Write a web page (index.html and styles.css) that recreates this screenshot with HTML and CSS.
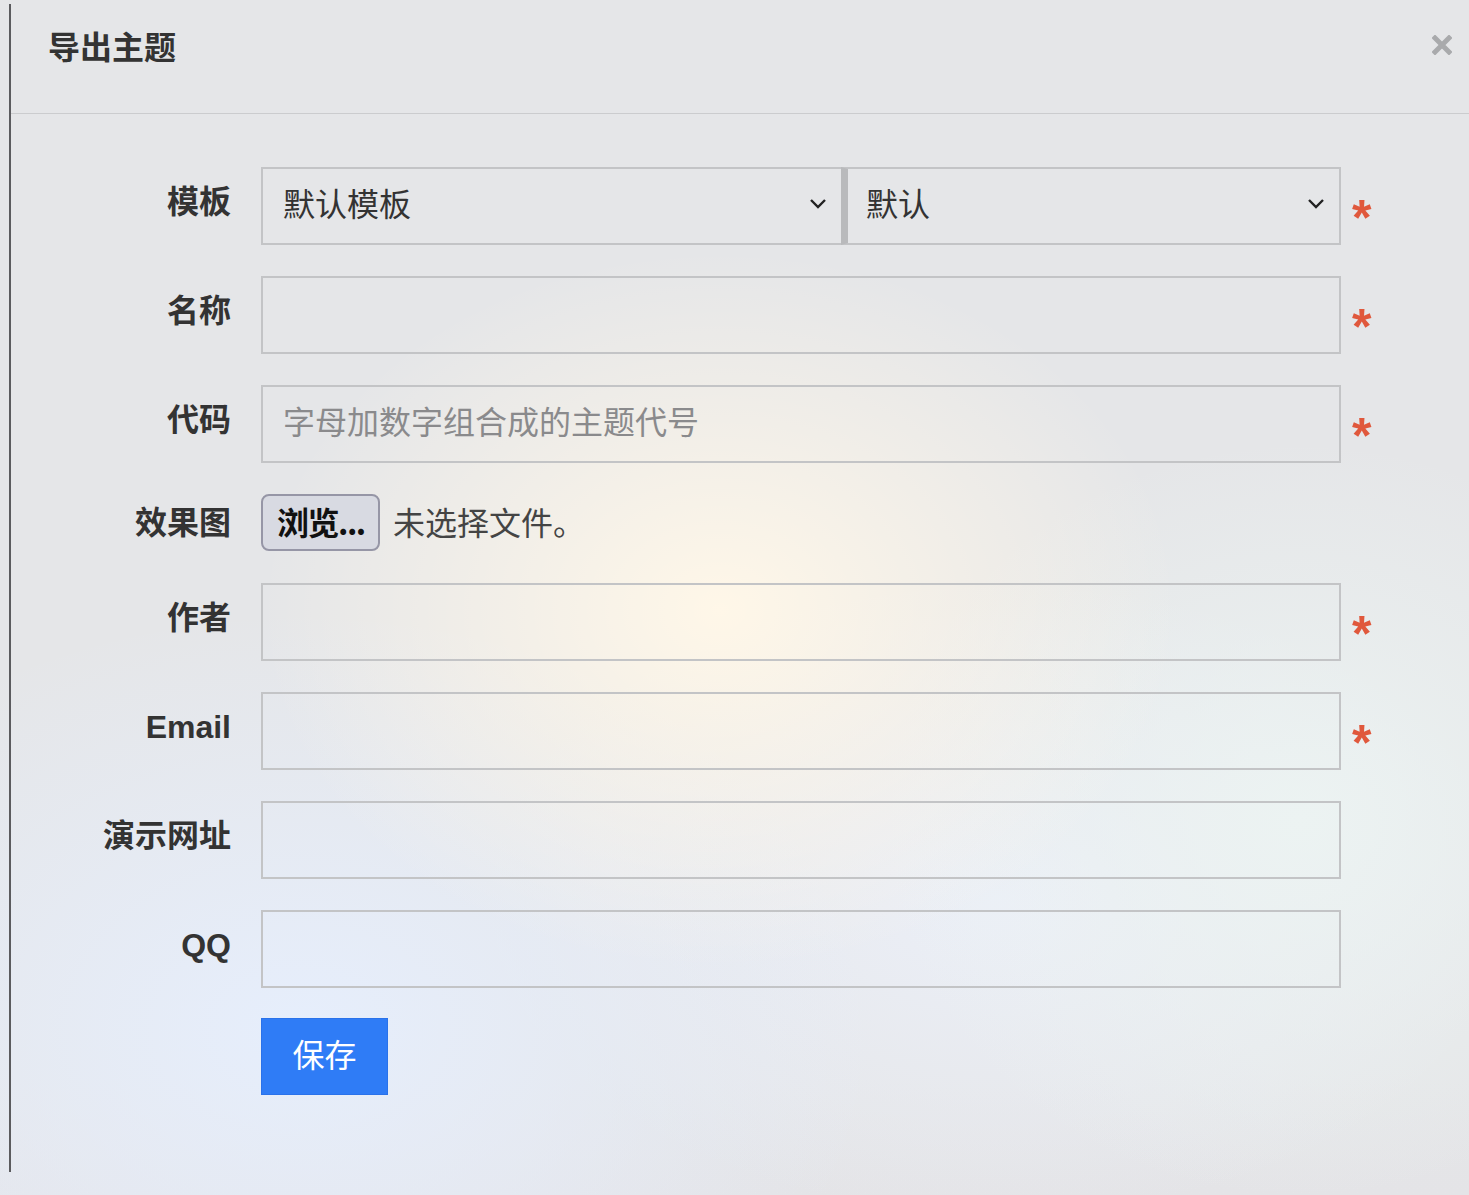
FILE: index.html
```html
<!DOCTYPE html>
<html lang="zh-CN">
<head>
<meta charset="utf-8">
<title>导出主题</title>
<link rel="stylesheet" href="styles.css">
</head>
<body>
<div class="dialog">
  <div class="dialog-header">
    <h1 class="dialog-title">导出主题</h1>
    <button class="close-btn" type="button" aria-label="关闭">
      <svg width="20" height="20" viewBox="0 0 20 20"><path d="M3 3 L17 17 M17 3 L3 17" stroke="#a9aaac" stroke-width="5" stroke-linecap="square" fill="none"/></svg>
    </button>
  </div>
  <form class="dialog-body">
    <div class="row">
      <label class="label">模板</label>
      <div class="control control-split">
        <select class="select select-a"><option>默认模板</option></select>
        <select class="select select-b"><option>默认</option></select>
      </div>
      <span class="req">*</span>
    </div>
    <div class="row">
      <label class="label">名称</label>
      <input class="control input" type="text">
      <span class="req">*</span>
    </div>
    <div class="row">
      <label class="label">代码</label>
      <input class="control input" type="text" placeholder="字母加数字组合成的主题代号">
      <span class="req">*</span>
    </div>
    <div class="row row-file">
      <label class="label">效果图</label>
      <div class="file">
        <span class="file-btn">浏览...</span>
        <span class="file-name">未选择文件。</span>
      </div>
    </div>
    <div class="row">
      <label class="label">作者</label>
      <input class="control input" type="text">
      <span class="req">*</span>
    </div>
    <div class="row">
      <label class="label">Email</label>
      <input class="control input" type="text">
      <span class="req">*</span>
    </div>
    <div class="row">
      <label class="label">演示网址</label>
      <input class="control input" type="text">
    </div>
    <div class="row">
      <label class="label">QQ</label>
      <input class="control input" type="text">
    </div>
    <div class="row row-actions">
      <span class="label"></span>
      <button class="save-btn" type="button">保存</button>
    </div>
  </form>
</div>
</body>
</html>
```
FILE: styles.css
```css
html, body {
  margin: 0;
  padding: 0;
}
body {
  width: 1469px;
  height: 1195px;
  overflow: hidden;
  font-family: "Liberation Sans", "Noto Sans CJK SC", sans-serif;
  color: #333;
  background-color: #e5e6e8;
  background-image:
    radial-gradient(ellipse 460px 360px at 720px 610px, rgba(255, 247, 232, 1), rgba(255, 247, 232, 0) 100%),
    radial-gradient(ellipse 580px 420px at 300px 1030px, rgba(230, 238, 252, 1), rgba(230, 238, 252, 0) 100%),
    radial-gradient(ellipse 420px 380px at 1300px 820px, rgba(236, 243, 242, 1), rgba(236, 243, 242, 0) 100%),
    radial-gradient(ellipse 520px 320px at 1000px 900px, rgba(236, 240, 249, 0.9), rgba(236, 240, 249, 0) 100%),
    linear-gradient(to bottom, rgba(229, 230, 232, 0) 1080px, rgba(228, 228, 231, 1) 1195px);
}
.dialog {
  margin: 4px 0 0 9px;
  height: 1168px;
  border-left: 2px solid #5b5b5e;
  box-sizing: border-box;
}
.dialog-header {
  height: 110px;
  box-sizing: border-box;
  border-bottom: 1px solid #cbccce;
  display: flex;
  justify-content: space-between;
  align-items: flex-start;
  padding: 19px 17px 0 37px;
}
.dialog-title {
  margin: 0;
  font-size: 32px;
  line-height: 44px;
  font-weight: 700;
  color: #333;
  font-family: "Noto Sans CJK SC", sans-serif;
}
.close-btn {
  margin-top: 12px;
  padding: 0;
  border: 0;
  background: none;
  width: 20px;
  height: 20px;
  display: block;
}
.close-btn svg {
  display: block;
}
.dialog-body {
  padding-top: 53px;
  margin: 0;
}
.row {
  display: flex;
  align-items: flex-start;
  height: 78px;
  margin-bottom: 31px;
}
.row-file {
  height: 58px;
}
.row-actions {
  margin-top: -1px;
  height: 77px;
}
.label {
  width: 220px;
  flex: none;
  margin-right: 30px;
  text-align: right;
  font-size: 32px;
  font-weight: 700;
  line-height: 44px;
  padding-top: 13px;
  color: #333;
  box-sizing: border-box;
}
.row-file .label {
  padding-top: 7px;
}
.control {
  width: 1080px;
  height: 78px;
  box-sizing: border-box;
  flex: none;
}
.input {
  border: 2px solid #c3c4c6;
  background: transparent;
  font-family: "Noto Sans CJK SC", sans-serif;
  font-size: 32px;
  padding: 0 20px 8px 20px;
  color: #333;
  margin: 0;
  outline: none;
}
.input::placeholder {
  color: #8a8a8c;
}
.control-split {
  display: flex;
}
.select {
  -webkit-appearance: none;
  appearance: none;
  height: 78px;
  box-sizing: border-box;
  margin: 0;
  border: 2px solid #c3c4c6;
  border-radius: 0;
  background-color: transparent;
  background-image: url("data:image/svg+xml,%3Csvg xmlns='http://www.w3.org/2000/svg' width='18' height='11' viewBox='0 0 18 11'%3E%3Cpath d='M2 2 L9 9 L16 2' fill='none' stroke='%23222' stroke-width='2.4'/%3E%3C/svg%3E");
  background-repeat: no-repeat;
  font-family: "Noto Sans CJK SC", sans-serif;
  font-size: 32px;
  color: #333;
  padding: 0 40px 8px 20px;
  outline: none;
}
.select-a {
  width: 580px;
  border-right: 0;
  background-position: right 14px top 29px;
}
.select-b {
  width: 500px;
  border-left: 7px solid #b9babc;
  padding-left: 18px;
  background-position: right 14px top 29px;
}
.req {
  margin-left: 11px;
  color: #e0583c;
  font-size: 50px;
  font-weight: 700;
  line-height: 50px;
  padding-top: 26px;
  font-family: "Liberation Sans", sans-serif;
}
.file {
  display: flex;
  align-items: center;
  height: 57px;
}
.file-btn {
  display: inline-flex;
  align-items: center;
  width: 119px;
  height: 57px;
  box-sizing: border-box;
  padding: 0 0 4px 14px;
  border: 2px solid #9696a6;
  border-radius: 8px;
  background: #d8dae2;
  font-family: "Noto Sans CJK SC", sans-serif;
  font-size: 32px;
  font-weight: 700;
  color: #111;
  letter-spacing: -1.5px;
  white-space: nowrap;
  overflow: hidden;
}
.file-name {
  margin-left: 13px;
  padding-bottom: 4px;
  font-family: "Noto Sans CJK SC", sans-serif;
  font-size: 32px;
  color: #444;
}
.save-btn {
  width: 127px;
  height: 77px;
  padding: 0 0 8px 0;
  border: 1px solid #2a72ea;
  background: #2f7cf6;
  color: #fff;
  font-family: "Noto Sans CJK SC", sans-serif;
  font-size: 32px;
  line-height: 44px;
}
```
